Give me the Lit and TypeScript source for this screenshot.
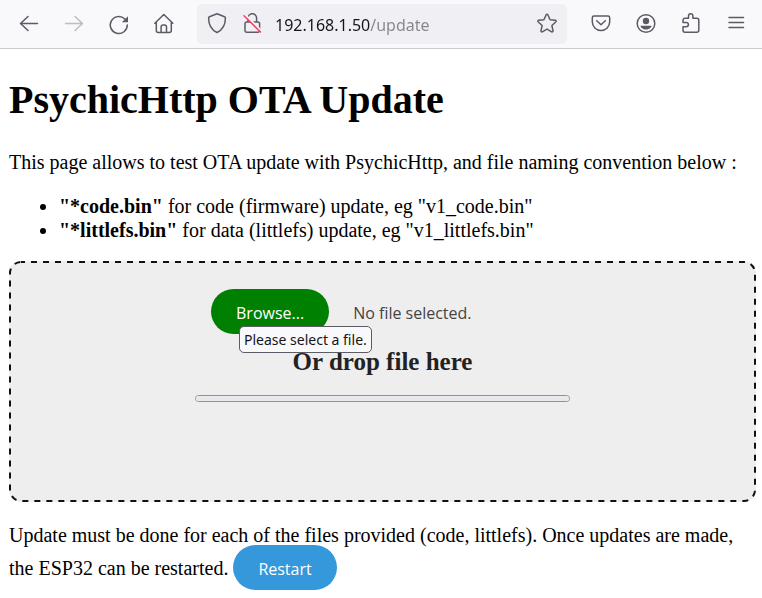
import { LitElement, html, css, svg } from "lit";
import { customElement } from "lit/decorators.js";

const icons: Record<string, unknown> = {
  back: svg`<path d="M20.500 11.500H4M11 4.500l-7.500 7 7.500 7" />`,
  forward: svg`<path d="M3.500 11.500H20M13 4.500l7.500 7-7.500 7" />`,
  reload: svg`<path d="M20.300 13a8.500 8.500 0 1 1-2.700-6.200l1.500 1.500" /><path class="solid" d="M21 4.200v6h-6.200z" />`,
  home: svg`<path d="M2.800 11.300 11.800 2.500l9 8.800M4.300 10.300v8.200a2 2 0 0 0 2 2h11a2 2 0 0 0 2-2v-8.200M9.100 20.300v-5.300a2 2 0 0 1 2-2h1.400a2 2 0 0 1 2 2v5.300" />`,
  shield: svg`<path d="M12 1.800 19.500 4.700a1.400 1.400 0 0 1 .9 1.300c0 6-2 11.500-8.400 14.500C5.600 17.500 3.600 12 3.600 6a1.400 1.400 0 0 1 .9-1.300z" />`,
  lock: svg`<path d="M7 10V6a4.300 4.300 0 0 1 8.600 0v4M5.800 10h11a1.800 1.800 0 0 1 1.800 1.800v6.700a1.800 1.800 0 0 1-1.800 1.800h-11A1.800 1.800 0 0 1 4 18.500v-6.700A1.800 1.800 0 0 1 5.800 10z" /><path class="halo" d="M4.500 3 20 18.500" /><path class="slash" d="M3 3.800 19.500 20" />`,
  star: svg`<path d="M11.200 2.700a.9.9 0 0 1 1.600 0l2.300 5 5.300.6a.9.9 0 0 1 .5 1.500l-4 3.700 1.100 5.300a.9.9 0 0 1-1.300 1L12 17.100l-4.700 2.700a.9.9 0 0 1-1.300-1l1.100-5.300-4-3.700a.9.9 0 0 1 .5-1.500l5.300-.6z" />`,
  pocket: svg`<path d="M5 4h14a1.700 1.700 0 0 1 1.700 1.700V9.800a8.700 8.700 0 0 1-17.400 0V5.700A1.700 1.700 0 0 1 5 4z" /><path d="m7.700 8.700 4.300 4 4.300-4" />`,
  account: svg`<circle cx="12" cy="11.500" r="8.800" /><circle class="solid" cx="12" cy="9" r="3.200" /><path class="solid" d="M6.500 13.800h11c0 2-2.500 3.700-5.500 3.700s-5.500-1.700-5.500-3.700z" />`,
  extension: svg`<path d="M9.500 6.300V4a2.200 2.200 0 0 1 4.400 0v2.300h3.900a2 2 0 0 1 2 2v10a2 2 0 0 1-2 2H6a2 2 0 0 1-2-2v-3.500h3.200a2.200 2.200 0 0 0 0-4.400H4V8.300a2 2 0 0 1 2-2z" />`,
  menu: svg`<path d="M5 5.500h14.500M5 10.500h14.500M5 15.500h14.500" />`,
};

const icon = (name: string) =>
  html`<svg class="icon" viewBox="0 0 24 24" aria-hidden="true">${icons[name]}</svg>`;

@customElement("browser-toolbar")
export class BrowserToolbar extends LitElement {
  static styles = css`
    :host {
      display: flex;
      align-items: center;
      gap: 11px;
      height: 48px;
      padding: 0 4px 0 6px;
      border-bottom: 1px solid #ccc;
      background: #f9f9fb;
    }
    .group {
      display: flex;
    }
    button {
      display: flex;
      align-items: center;
      justify-content: center;
      width: 45px;
      height: 40px;
      padding: 0;
      border: 0;
      background: none;
      color: #5b5b66;
    }
    button:disabled {
      color: #bcbcc2;
    }
    .icon {
      display: block;
      width: 24px;
      height: 24px;
      fill: none;
      stroke: currentColor;
      stroke-width: 1.5;
      stroke-linecap: round;
      stroke-linejoin: round;
    }
    .solid {
      fill: currentColor;
      stroke: none;
    }
    .halo {
      stroke: #f0f0f4;
      stroke-width: 2;
    }
    .slash {
      stroke: #ff3b6b;
    }
    .address {
      flex: 1;
      min-width: 0;
      box-sizing: border-box;
      display: flex;
      align-items: center;
      height: 40px;
      padding-left: 2px;
      border-radius: 5px;
      background: #f0f0f4;
    }
    .address button {
      width: 36px;
      flex: none;
    }
    .address .star {
      width: 40px;
    }
    .url {
      flex: 1;
      min-width: 0;
      height: 32px;
      margin-left: 4px;
      padding: 2px 0 0;
      border: 0;
      outline: 0;
      font: 16px/24px "Noto Sans", sans-serif;
      color: transparent;
      background: linear-gradient(90deg, #15141a 95px, #85858c 95px);
      -webkit-background-clip: text;
      background-clip: text;
    }
  `;

  private action(name: string, label: string) {
    return html`<button
      class=${name}
      aria-label=${label}
      ?disabled=${name === "forward"}
    >${icon(name)}</button>`;
  }

  render() {
    return html`
      <div class="group">
        ${this.action("back", "Back")} ${this.action("forward", "Forward")}
        ${this.action("reload", "Reload")} ${this.action("home", "Home")}
      </div>
      <div class="address">
        ${this.action("shield", "Tracking protection")}
        ${this.action("lock", "Connection not secure")}
        <input class="url" aria-label="Address" spellcheck="false" value="192.168.1.50/update" />
        ${this.action("star", "Bookmark this page")}
      </div>
      <div class="group">
        ${this.action("pocket", "Save to Pocket")} ${this.action("account", "Account")}
        ${this.action("extension", "Extensions")} ${this.action("menu", "Menu")}
      </div>
    `;
  }
}

@customElement("app-root")
export class AppRoot extends LitElement {
  static styles = css`
    :host {
      display: block;
      min-height: 100vh;
      background: #fff;
      color: #000;
      font: 20px/24px "Liberation Serif", "Times New Roman", serif;
    }
    main {
      padding: 27px 6px 8px 9px;
    }
    h1 {
      margin: 0 0 26px;
      font-size: 40px;
      line-height: 48px;
    }
    p {
      margin: 0;
    }
    ul {
      margin: 20px 0 19px;
      padding-left: 50px;
    }
    .drop {
      position: relative;
      box-sizing: border-box;
      display: flex;
      flex-direction: column;
      align-items: center;
      min-height: 241px;
      margin-bottom: 21px;
      padding: 28px 0;
      border-radius: 12px;
      background: #eee;
      color: #222;
    }
    .outline {
      position: absolute;
      inset: 0;
      width: 100%;
      height: 100%;
      pointer-events: none;
    }
    .outline rect {
      x: 1px;
      y: 1px;
      width: calc(100% - 2px);
      height: calc(100% - 2px);
      rx: 11px;
      fill: none;
      stroke: #111;
      stroke-width: 2;
      stroke-dasharray: 6 6;
      stroke-dashoffset: 2;
    }
    .picker {
      position: relative;
      display: flex;
      align-items: center;
      gap: 24px;
      width: 343px;
      color: #444;
      font: 16px/24px "Open Sans", sans-serif;
    }
    .picker input {
      position: absolute;
      width: 1px;
      height: 1px;
      opacity: 0;
    }
    .pill {
      box-sizing: border-box;
      height: 45px;
      padding: 12px 25px 9px;
      border: 0;
      border-radius: 23px;
      color: #fff;
      font: 16px/24px "Open Sans", sans-serif;
    }
    .browse {
      background: #008000;
    }
    .restart {
      margin-top: -2px;
      background: #3498db;
    }
    .status {
      padding-top: 3px;
    }
    .tip {
      position: absolute;
      top: 37px;
      left: 28px;
      padding: 0 4px;
      border: 1px solid #5b5b66;
      border-radius: 5px;
      background: #f9f9fb;
      color: #15141a;
      font: 14px/25px "Noto Sans", sans-serif;
      white-space: nowrap;
    }
    h2 {
      margin: 15px 0 20px;
      font-size: 25px;
      line-height: 26px;
    }
    progress {
      appearance: none;
      box-sizing: border-box;
      width: 375px;
      max-width: 90%;
      height: 7px;
      border: 1px solid #8f8f9d;
      border-radius: 4px;
      background: #e9e9ed;
      overflow: hidden;
    }
    progress::-webkit-progress-bar {
      background: #e9e9ed;
    }
  `;

  render() {
    return html`
      <browser-toolbar></browser-toolbar>
      <main>
        <h1>PsychicHttp OTA Update</h1>
        <p>This page allows to test OTA update with PsychicHttp, and file naming convention below :</p>
        <ul>
          <li><b>"*code.bin"</b> for code (firmware) update, eg "v1_code.bin"</li>
          <li><b>"*littlefs.bin"</b> for data (littlefs) update, eg "v1_littlefs.bin"</li>
        </ul>
        <section class="drop">
          <svg class="outline" aria-hidden="true"><rect /></svg>
          <label class="picker">
            <input type="file" accept=".bin" />
            <span class="pill browse">Browse...</span>
            <span class="status">No file selected.</span>
            <span class="tip" role="tooltip">Please select a file.</span>
          </label>
          <h2>Or drop file here</h2>
          <progress value="0" max="100" aria-label="Upload progress"></progress>
        </section>
        <p>
          Update must be done for each of the files provided (code, littlefs). Once updates are made,
          the ESP32 can be restarted.
          <button class="pill restart">Restart</button>
        </p>
      </main>
    `;
  }
}
